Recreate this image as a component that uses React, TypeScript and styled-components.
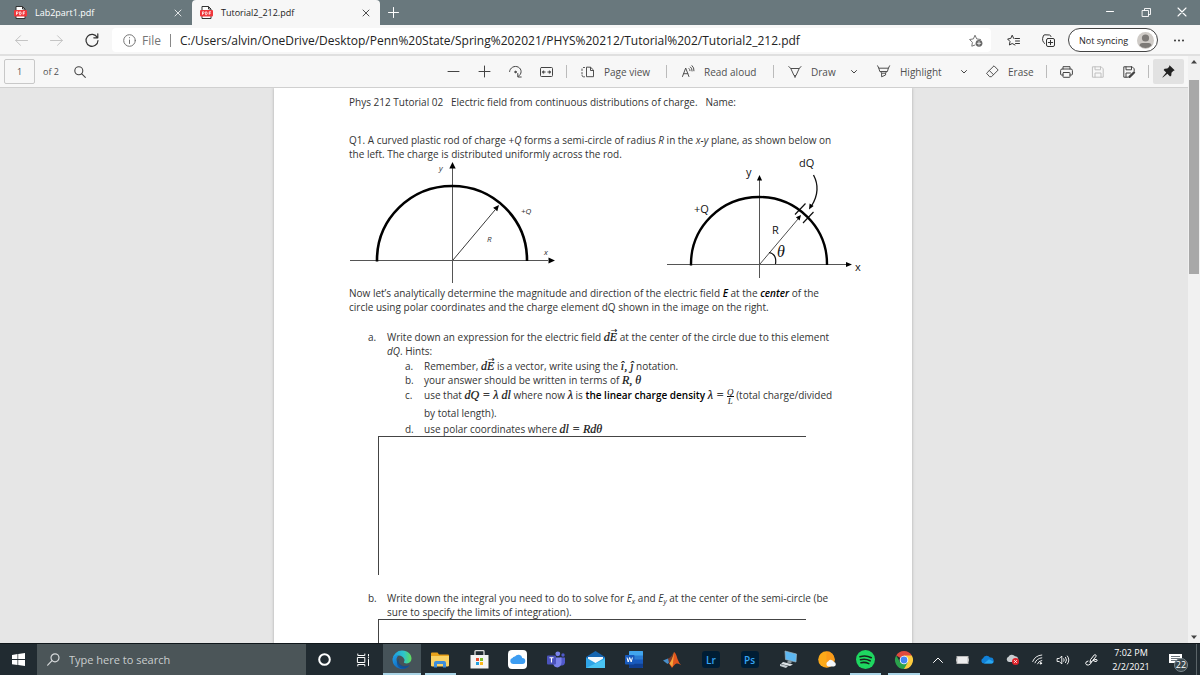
import React from "react";
import styled, { createGlobalStyle, css } from "styled-components";

const Global = createGlobalStyle`
  *, *::before, *::after { box-sizing: border-box; }
  body { margin: 0; background: #e6e6e6; font-family: "Open Sans", "Noto Sans", sans-serif; color: #222; }
  button, input { font: inherit; color: inherit; }
  button { border: 0; background: none; padding: 0; margin: 0; }
  svg { display: block; flex: none; overflow: visible; }
`;

/* ---------- window frame ---------- */

const Window = styled.div`
  display: flex;
  flex-direction: column;
  height: 100vh;
  overflow: hidden;
`;

const TabStrip = styled.header`
  display: flex;
  flex: none;
  height: 25px;
  background: #69787d;
  color: #fff;
`;

const Tab = styled.div<{ $active?: boolean }>`
  display: flex;
  align-items: center;
  gap: 8px;
  width: ${(p) => (p.$active ? 188 : 192)}px;
  padding: 0 5px 0 ${(p) => (p.$active ? 8 : 14)}px;
  font-size: 9px;
  line-height: 24px;
  ${(p) =>
    p.$active &&
    css`
      background: #f7f7f7;
      color: #222;
      border-radius: 4px 4px 0 0;
    `}
`;

const TabTitle = styled.span`
  flex: 1;
  white-space: nowrap;
`;

const TabClose = styled.button`
  display: grid;
  place-items: center;
  width: 18px;
  height: 18px;
`;

const NewTab = styled.button`
  display: grid;
  place-items: center;
  width: 26px;
`;

const WindowButtons = styled.div`
  display: flex;
  margin-left: auto;
`;

const WindowButton = styled.button`
  display: grid;
  place-items: center;
  width: 36px;
  height: 24px;
`;

const AddressBar = styled.div`
  display: flex;
  align-items: center;
  flex: none;
  height: 31px;
  padding: 1px 0 0 4px;
  background: #f7f7f7;
  border-bottom: 2px solid #e0e0e0;
`;

const NavButton = styled.button<{ $muted?: boolean }>`
  display: grid;
  place-items: center;
  width: 35px;
  height: 24px;
  color: ${(p) => (p.$muted ? "#c4c4c4" : "#333")};
`;

const UrlField = styled.div`
  display: flex;
  align-items: center;
  flex: 1;
  height: 24px;
  margin: 0 5px 0 3px;
  padding: 0 8px 0 11px;
  border-radius: 4px;
  background: #fff;
  color: #757575;
  font-size: 12px;
`;

const UrlScheme = styled.span`
  padding: 0 9px 0 6px;
`;

const UrlInput = styled.input`
  flex: 1;
  min-width: 0;
  height: 20px;
  margin-left: 9px;
  padding: 0;
  border: 0;
  outline: 0;
  background: none;
  color: #222;
`;

const Divider = styled.span<{ $tight?: boolean }>`
  flex: none;
  width: 1px;
  height: 13px;
  margin: 0 ${(p) => (p.$tight ? 0 : 4)}px;
  background: ${(p) => (p.$tight ? "#888" : "#bbb")};
`;

const Profile = styled.button`
  display: flex;
  align-items: center;
  justify-content: space-between;
  width: 90px;
  height: 24px;
  margin-left: 2px;
  padding: 0 3px 0 10px;
  border: 1px solid #444;
  border-radius: 12px;
  background: #fff;
  font-size: 9px;
`;

const MoreButton = styled(NavButton)`
  width: 42px;
`;

/* ---------- viewer ---------- */

const Viewer = styled.div`
  display: flex;
  flex: 1;
  min-height: 0;
`;

const ViewerMain = styled.div`
  display: flex;
  flex-direction: column;
  flex: 1;
  min-width: 0;
`;

const Toolbar = styled.div`
  display: flex;
  align-items: center;
  flex: none;
  height: 32px;
  padding: 0 4px;
  background: #f7f7f7;
  border-bottom: 1px solid #d0d0d0;
  color: #505050;
  font-size: 10px;
`;

const PageInfo = styled.label`
  display: flex;
  align-items: center;
  gap: 8px;
  margin-right: 6px;
  font-size: 9px;
`;

const PageNumber = styled.input`
  width: 31px;
  height: 25px;
  padding: 0;
  border: 1px solid #c8c8c8;
  border-radius: 2px;
  background: #f7f7f7;
  text-align: center;
`;

const Spacer = styled.span`
  flex: 1;
`;

const IconButton = styled.button<{ $pressed?: boolean; $faded?: boolean; $narrow?: boolean }>`
  display: grid;
  place-items: center;
  width: ${(p) => (p.$narrow ? 20 : 31)}px;
  height: 25px;
  border-radius: 2px;
  background: ${(p) => (p.$pressed ? "#e2e2e2" : "none")};
  color: ${(p) => (p.$faded ? "#c0c0c0" : p.$pressed ? "#222" : "#444")};
`;

const ToolButton = styled.button<{ $width: number }>`
  display: flex;
  align-items: center;
  gap: 9px;
  width: ${(p) => p.$width}px;
  height: 25px;
  padding-left: 10px;
  white-space: nowrap;
`;

const Canvas = styled.main`
  flex: 1;
  min-height: 0;
  padding-right: 2px;
  overflow: hidden;
  background: #e6e6e6;
`;

const ScrollTrack = styled.div`
  display: flex;
  flex-direction: column;
  align-items: center;
  width: 12px;
  background: #f1f1f1;
`;

const ScrollArrow = styled.button`
  display: grid;
  place-items: center;
  width: 12px;
  height: 12px;
  color: #444;
`;

const ScrollThumb = styled.div`
  width: 10px;
  height: 33%;
  margin: 12px 0 auto;
  background: #a8a8a8;
`;

/* ---------- document ---------- */

const Sheet = styled.article`
  width: 638px;
  min-height: 100%;
  margin: 0 auto;
  padding: 7px 0 0 75px;
  background: #fff;
  box-shadow: 0 0 3px #aaa;
  color: #333;
  font-size: 10px;
  line-height: 14px;
  white-space: nowrap;
`;

const Heading = styled.p`
  margin: 0 0 24px;
  white-space: pre;
`;

const Paragraph = styled.p`
  margin: 0;
`;

const Figure = styled.figure`
  margin: 0;
  height: 125px;
`;

const Question = styled.section`
  display: grid;
  grid-template-columns: 19px 1fr;
  margin-top: 16px;
  padding-left: 19px;
`;

const HintList = styled.ol`
  display: grid;
  grid-template-columns: 19px 1fr;
  margin: 1px 0 0;
  padding: 0 0 0 18px;
  list-style: none;
`;

const Hint = styled.li<{ $tall?: boolean }>`
  display: contents;
  line-height: ${(p) => (p.$tall ? 17 : 14)}px;
`;

const AnswerBox = styled.div`
  width: 428px;
  height: 139px;
  margin-left: 29px;
  border: solid #444;
  border-width: 1px 0 0 1px;
`;

const MathText = styled.i`
  font-family: "Liberation Serif", serif;
  font-size: 12px;
  line-height: 1px;
  color: #111;
  -webkit-text-stroke: 0.2px #111;
`;

const Vector = styled.span`
  position: relative;
  &::before {
    content: "→";
    position: absolute;
    left: 1px;
    top: -3px;
    font: 8px/8px "DejaVu Sans", sans-serif;
    -webkit-text-stroke: 0;
  }
`;

const Fraction = styled.span`
  display: inline-flex;
  flex-direction: column;
  align-items: center;
  height: 17px;
  vertical-align: middle;
  font-family: "Liberation Serif", serif;
  font-style: italic;
  font-size: 9px;
  line-height: 8px;
  color: #111;
`;

const Numerator = styled.span`
  border-bottom: 1px solid #111;
`;

const Sub = styled.sub`
  font-size: 7px;
  line-height: 1px;
  vertical-align: -2px;
`;

const Strong = styled.strong`
  color: #000;
  font-weight: 600;
`;

/* ---------- taskbar ---------- */

const Taskbar = styled.footer`
  display: flex;
  flex: none;
  height: 32px;
  border-top: 1px solid #10171b;
  background: #212b31;
  color: #fff;
`;

const StartButton = styled.button`
  display: grid;
  place-items: center;
  width: 37px;
`;

const SearchBox = styled.label`
  display: flex;
  align-items: center;
  gap: 9px;
  flex: 0 1 269px;
  padding-left: 10px;
  background: #4b5558;
  color: #d6d9da;
`;

const SearchInput = styled.input`
  width: 180px;
  padding: 0;
  border: 0;
  outline: 0;
  background: none;
  font-size: 11px;
  &::placeholder {
    color: #c9cdce;
    opacity: 1;
  }
`;

const SystemButtons = styled.div`
  display: grid;
  grid-template-columns: 1fr 1fr;
  width: 77px;
`;

const AppRow = styled.nav`
  display: grid;
  grid-template-columns: repeat(14, 1fr);
  width: 541px;
`;

const TaskButton = styled.button<{ $running?: boolean; $focused?: boolean }>`
  display: grid;
  place-items: center;
  margin: 0 4px 0 3px;
  border-top: 2px solid transparent;
  border-bottom: 2px solid ${(p) => (p.$running ? "#a9d3e5" : "transparent")};
  ${(p) =>
    p.$focused &&
    css`
      margin: 0 1px 0 0;
      border-top-color: #465359;
      background: #465359;
    `}
`;

const AdobeTile = styled.span`
  display: grid;
  place-items: center;
  width: 18px;
  height: 17px;
  border-radius: 3px;
  background: #001d34;
  color: #35a5f5;
  font-size: 10px;
  line-height: 16px;
  font-weight: 600;
`;

const Tray = styled.div`
  display: flex;
  flex: 1;
  padding-left: 1px;
`;

const TrayButton = styled.button`
  display: grid;
  place-items: center;
  width: 25px;
`;

const PenButton = styled(TrayButton)`
  width: 32px;
`;

const Clock = styled.time`
  display: flex;
  flex-direction: column;
  justify-content: center;
  width: 48px;
  text-align: center;
  font-size: 9px;
  line-height: 14px;
`;

const Notifications = styled.button`
  position: relative;
  display: grid;
  place-items: center;
  flex: 1;
  border-right: 1px solid #5a6468;
  margin-right: 3px;
`;

const Badge = styled.span`
  position: absolute;
  right: 8px;
  bottom: 3px;
  width: 14px;
  height: 14px;
  border: 1px solid #7b878c;
  border-radius: 7px;
  background: #3a474d;
  font-size: 9px;
  line-height: 12px;
`;

/* ---------- icons ---------- */

const Line = ({
  w = 14,
  h = w,
  box = `0 0 ${w} ${h}`,
  sw = 1,
  children,
}: {
  w?: number;
  h?: number;
  box?: string;
  sw?: number;
  children: React.ReactNode;
}) => (
  <svg width={w} height={h} viewBox={box} fill="none" stroke="currentColor" strokeWidth={sw} strokeLinecap="round" strokeLinejoin="round" aria-hidden="true">
    {children}
  </svg>
);

const PdfIcon = () => (
  <svg width="13" height="13" viewBox="0 0 13 13" aria-hidden="true">
    <path d="M2 .5h6.5l2.5 2.500v9.500H2z" fill="#fff" stroke="#333" />
    <path d="M8.500.5V3H11" fill="none" stroke="#333" />
    <rect x="0" y="4" width="13" height="6.500" rx="1" fill="#f0383c" />
    <path d="M2.500 8.800V5.800h1.200q.8.900 0 1.700H2.500M5.700 5.800v3h.8q1.700-1.500 0-3zM9.200 8.800v-3h1.800M9.200 7.300h1.500" fill="none" stroke="#fff" strokeWidth=".8" />
  </svg>
);

const Cross = ({ size = 6 }: { size?: number }) => (
  <Line w={size} box="0 0 6 6" sw={0.8}>
    <path d="M0 0l6 6M6 0L0 6" />
  </Line>
);

const Chevron = () => (
  <Line w={6} h={4}>
    <path d="M.5.5L3 3 5.500.5" />
  </Line>
);

/* ---------- figures ---------- */

const Diagrams = () => (
  <svg width="525" height="124" viewBox="349 161 525 124" role="img" aria-label="Semi-circular rod of charge, two views">
    <g fill="none" stroke="#555">
      <path d="M452.500 168V283M350 260.500H548" />
      <path d="M453 260L495 210" strokeWidth=".9" stroke="#222" />
      <path d="M759.500 178V278M667 264.500H847" />
      <path d="M760 264L798 219" strokeWidth=".8" stroke="#222" />
      <path d="M769 252.500Q777 254 775.500 264M795 214.500L805.500 203.500M803 223L813.500 212" stroke="#111" strokeWidth="1.200" />
      <path d="M813.500 175Q821.500 190 811.500 206" stroke="#111" strokeWidth="1.300" />
    </g>
    <g fill="none" stroke="#000">
      <path d="M377 261.500V260A75 74 0 0 1 527 260V261" strokeWidth="2.600" />
      <path d="M691 265.500V264A68 67 0 0 1 827 264V265" strokeWidth="2.400" />
    </g>
    <g fill="#000">
      <path d="M452.500 162l3.200 6.500h-6.400zM555 260.500l-6.500 3v-6zM499 205l-1.700 6.300-4.200-3.600zM759.500 175l2.600 5.500h-5.200zM852 264.500l-6 2.600v-5.200zM801 215l-1.400 5.500-3.700-3.200zM809 209.500l.6-6 4 2.500z" />
    </g>
    <g fill="#333" fontFamily="Open Sans, sans-serif" fontSize="8" fontStyle="italic">
      <text x="439" y="171">y</text>
      <text x="521" y="214">+Q</text>
      <text x="487" y="242">R</text>
      <text x="544" y="255">x</text>
    </g>
    <g fill="#111" fontFamily="Open Sans, sans-serif" fontSize="11">
      <text x="746" y="176">y</text>
      <text x="799" y="167">dQ</text>
      <text x="694" y="213">+Q</text>
      <text x="772" y="234">R</text>
      <text x="855" y="271">x</text>
    </g>
    <text x="777" y="257" fill="#111" fontFamily="Liberation Serif, serif" fontStyle="italic" fontSize="16">θ</text>
  </svg>
);

const VecE = () => (
  <MathText>
    d<Vector>E</Vector>
  </MathText>
);

/* ---------- app ---------- */

export default function App() {
  return (
    <>
      <Global />
      <Window>
        <TabStrip>
          <Tab>
            <PdfIcon />
            <TabTitle>Lab2part1.pdf</TabTitle>
            <TabClose aria-label="Close Lab2part1.pdf"><Cross /></TabClose>
          </Tab>
          <Tab $active>
            <PdfIcon />
            <TabTitle>Tutorial2_212.pdf</TabTitle>
            <TabClose aria-label="Close Tutorial2_212.pdf"><Cross /></TabClose>
          </Tab>
          <NewTab aria-label="New tab">
            <Line w={11}><path d="M5.500.5v10M.5 5.500h10" /></Line>
          </NewTab>
          <WindowButtons>
            <WindowButton aria-label="Minimize"><Line w={8} h={2}><path d="M.5.5h7" /></Line></WindowButton>
            <WindowButton aria-label="Restore">
              <Line w={9} sw={0.9}><path d="M.5 2.500h6v6h-6zM2.500 2.500v-2h6v6h-2" /></Line>
            </WindowButton>
            <WindowButton aria-label="Close"><Cross size={8} /></WindowButton>
          </WindowButtons>
        </TabStrip>

        <AddressBar>
          <NavButton $muted aria-label="Back">
            <Line w={13} h={11}><path d="M12.500 5.500H.7M5.500.7L.7 5.500l4.800 4.800" /></Line>
          </NavButton>
          <NavButton $muted aria-label="Forward">
            <Line w={13} h={11}><path d="M.5 5.500h11.800M7.500.7l4.800 4.800-4.800 4.800" /></Line>
          </NavButton>
          <NavButton aria-label="Refresh">
            <Line w={14} sw={1.2}><path d="M12.300 4.500A6 6 0 1 0 13 7.500M12.800.8v4H8.800" /></Line>
          </NavButton>
          <UrlField>
            <Line w={13}>
              <circle cx="6.500" cy="6.500" r="5.800" />
              <path d="M6.500 6v3.500M6.500 3.600v.2" />
            </Line>
            <UrlScheme>File</UrlScheme>
            <Divider $tight />
            <UrlInput
              aria-label="Address"
              defaultValue="C:/Users/alvin/OneDrive/Desktop/Penn%20State/Spring%202021/PHYS%20212/Tutorial%202/Tutorial2_212.pdf"
            />
            <Line w={14} h={13}>
              <path d="M6 11L2.800 12.200 3.400 8.300.6 5.500l3.800-.6L6 1.200l1.700 3.700 3.800.6" />
              <circle cx="10" cy="9.300" r="3.400" fill="#666" stroke="none" />
              <path d="M10 7.600V11M8.300 9.300h3.400" stroke="#fff" strokeWidth=".8" />
            </Line>
          </UrlField>
          <NavButton aria-label="Favorites">
            <Line w={13} h={12}>
              <path d="M8 11L5.200 9.500 2.400 11l.6-3.500L.6 5l3.200-.6L5.200 1.200l1.500 3.200M8 4.500h4.500M8.500 7h4M8.500 9.500h4" />
            </Line>
          </NavButton>
          <NavButton aria-label="Collections">
            <Line w={13}>
              <rect x="4.500" y="4.500" width="8" height="8" rx="1.500" />
              <path d="M8.500 6.300v4.400M6.300 8.500h4.400M2.800 9.500L1.500 8.300Q.3 6.500.6 4.500L1.300 2Q1.600.8 3 .8l4.500.2q1.200.2 1.500 1.500" />
            </Line>
          </NavButton>
          <Profile>
            Not syncing
            <svg width="17" height="17" viewBox="0 0 17 17" aria-hidden="true">
              <circle cx="8.500" cy="8.500" r="8.500" fill="#cfcbc7" />
              <circle cx="8.500" cy="6" r="3.600" fill="#7d7a77" />
              <path d="M2.500 13.500q0-2.500 3-2.500h6q3 0 3 2.500a8.400 8.400 0 0 1-12 0z" fill="#7d7a77" />
            </svg>
          </Profile>
          <MoreButton aria-label="Settings and more">
            <svg width="12" height="3" viewBox="0 0 12 3" fill="currentColor" aria-hidden="true">
              <circle cx="2" cy="1.500" r="1" /><circle cx="6" cy="1.500" r="1" /><circle cx="10" cy="1.500" r="1" />
            </svg>
          </MoreButton>
        </AddressBar>

        <Viewer>
          <ViewerMain>
            <Toolbar>
              <PageInfo>
                <PageNumber defaultValue="1" aria-label="Page number" />
                of 2
              </PageInfo>
              <IconButton aria-label="Find">
                <Line w={12} sw={1.1}><circle cx="4.800" cy="4.800" r="4" /><path d="M7.800 7.800l3.500 3.500" /></Line>
              </IconButton>
              <Spacer />
              <IconButton aria-label="Zoom out"><Line w={11}><path d="M0 5.500h11" /></Line></IconButton>
              <IconButton aria-label="Zoom in"><Line w={11}><path d="M0 5.500h11M5.500 0v11" /></Line></IconButton>
              <IconButton aria-label="Rotate">
                <Line w={13} h={12}>
                  <path d="M.6 5.500A5.800 5.300 0 1 1 9.500 10.200M8.800 7.500v3.500h3.400" />
                  <circle cx="6.500" cy="6" r=".8" fill="currentColor" />
                </Line>
              </IconButton>
              <IconButton aria-label="Fit to width">
                <Line w={13} h={10}>
                  <rect x=".5" y=".5" width="12" height="9" rx="1" />
                  <path d="M2.500 5h2.700M7.800 5h2.700" />
                  <path d="M2.200 5l1.600-1.500v3zM10.800 5L9.200 3.500v3z" fill="currentColor" strokeWidth=".4" />
                </Line>
              </IconButton>
              <Divider />
              <ToolButton $width={91}>
                <Line w={14} h={12}>
                  <path d="M5.500 1.500v9.200h7V4L9.800 1.500zM9.500 1.500v3h3M3.500 1.500h-1M1 3v1.500M1 6.500V8M1 9.500q.2 1.300 1.500 1.300h1" />
                </Line>
                Page view
              </ToolButton>
              <Divider />
              <ToolButton $width={98}>
                <Line w={14} h={14}>
                  <path d="M1.500 11.500L4.700 3l3.200 8.500M2.600 8.700h4.200M8 3.500q1 .8 1 2.200M9.500 2q1.800 1.500 1.600 4M11 .6q2.300 2 2 5.200" />
                </Line>
                Read aloud
              </ToolButton>
              <Divider />
              <ToolButton $width={66}>
                <Line w={14} h={14}>
                  <path d="M.8 1.500L2.800 3.500h8.400L13 1.500M2.800 3.500L6 10.500h2l3.200-7M6.500 10.500L7 12.500l.6-2" />
                </Line>
                Draw
              </ToolButton>
              <IconButton $narrow aria-label="Draw options"><Chevron /></IconButton>
              <ToolButton $width={90}>
                <Line w={17} h={14} box="-3 0 17 14">
                  <path d="M.6.8l1.200 2.400h9.600L12.600.8M1.800 3.200l1 3.300h7.600l1-3.300M3.600 6.500l1 1.700v3.600l4-1.800V8.200l1-1.700M4.600 8.200h4" />
                </Line>
                Highlight
              </ToolButton>
              <IconButton $narrow aria-label="Highlight options"><Chevron /></IconButton>
              <ToolButton $width={68}>
                <Line w={15} h={13} box="-2 0 15 13">
                  <path d="M.8 8L8 .8l4.200 4.200L5.500 11.700H4zM3.300 5.500l4.200 4.200" />
                </Line>
                Erase
              </ToolButton>
              <Divider />
              <IconButton aria-label="Print">
                <Line w={13} h={12}>
                  <path d="M3 3V.7h7V3M3 9H1.500Q.6 9 .6 8V4.500Q.6 3 2 3h9q1.400 0 1.400 1.500V8q0 1-1 1H10" />
                  <rect x="3" y="6.500" width="7" height="4.800" rx=".5" />
                </Line>
              </IconButton>
              <IconButton $faded aria-label="Save">
                <Line w={12}><path d="M.8.8h8.400l2 2v8.400H.8zM3 .8v3h5.500v-3M3 11.200V7h6v4.200" /></Line>
              </IconButton>
              <IconButton aria-label="Save as">
                <Line w={12}>
                  <path d="M5 11.200H.8V.8h8.400l2 2V5M3 .8v3h5.500v-3M3 11.200V7h4.500" />
                  <path d="M6.500 10.800L11 6.500" strokeWidth="2.400" />
                </Line>
              </IconButton>
              <Divider />
              <IconButton $pressed aria-label="Unpin toolbar">
                <svg width="13" height="13" viewBox="0 0 13 13" fill="currentColor" aria-hidden="true">
                  <path d="M7.500.3l5.200 5-1.500.6-1.700 1.900-.2 2.600-1.200 1-2.700-2.700L.8 12.600l-.4-.4L4.200 7.500 1.600 4.900l1-1.100 2.700-.2L7 1.900z" />
                </svg>
              </IconButton>
            </Toolbar>

            <Canvas>
              <Sheet>
                <Heading>Phys 212 Tutorial 02   Electric field from continuous distributions of charge.   Name:</Heading>
                <Paragraph>
                  Q1. A curved plastic rod of charge +<i>Q</i> forms a semi-circle of radius <i>R</i> in the <i>x-y</i> plane, as shown below on<br />
                  the left. The charge is distributed uniformly across the rod.
                </Paragraph>
                <Figure><Diagrams /></Figure>
                <Paragraph>
                  Now let’s analytically determine the magnitude and direction of the electric field{" "}
                  <Strong><i>E</i></Strong> at the <Strong><i>center</i></Strong> of the<br />
                  circle using polar coordinates and the charge element dQ shown in the image on the right.
                </Paragraph>

                <Question>
                  <span>a.</span>
                  <div>
                    <Paragraph>
                      Write down an expression for the electric field <VecE /> at the center of the circle due to this element<br />
                      <i>dQ</i>. Hints:
                    </Paragraph>
                    <HintList>
                      <Hint>
                        <span>a.</span>
                        <span>Remember, <VecE /> is a vector, write using the <MathText>î, ĵ</MathText> notation.</span>
                      </Hint>
                      <Hint>
                        <span>b.</span>
                        <span>your answer should be written in terms of <MathText>R, θ</MathText></span>
                      </Hint>
                      <Hint $tall>
                        <span>c.</span>
                        <span>
                          use that <MathText>dQ = λ dl</MathText> where now <MathText>λ</MathText> is{" "}
                          <Strong>the linear charge density</Strong> <MathText>λ = </MathText>
                          <Fraction><Numerator>Q</Numerator><span>L</span></Fraction> (total charge/divided<br />
                          by total length).
                        </span>
                      </Hint>
                      <Hint>
                        <span>d.</span>
                        <span>use polar coordinates where <MathText>dl = Rdθ</MathText></span>
                      </Hint>
                    </HintList>
                  </div>
                </Question>
                <AnswerBox />

                <Question>
                  <span>b.</span>
                  <Paragraph>
                    Write down the integral you need to do to solve for <i>E</i><Sub><i>x</i></Sub> and <i>E</i><Sub><i>y</i></Sub> at the center of the semi-circle (be<br />
                    sure to specify the limits of integration).
                  </Paragraph>
                </Question>
                <AnswerBox />
              </Sheet>
            </Canvas>
          </ViewerMain>
          <ScrollTrack>
            <ScrollArrow aria-label="Scroll up">
              <svg width="6" height="4" viewBox="0 0 6 4" fill="currentColor"><path d="M3 0l3 3.500H0z" /></svg>
            </ScrollArrow>
            <ScrollThumb />
            <ScrollArrow aria-label="Scroll down">
              <svg width="6" height="4" viewBox="0 0 6 4" fill="currentColor"><path d="M3 4L6 .5H0z" /></svg>
            </ScrollArrow>
          </ScrollTrack>
        </Viewer>

        <Taskbar>
          <StartButton aria-label="Start">
            <svg width="13" height="13" viewBox="0 0 13 13" fill="#fff"><path d="M0 1.900L5.500 1v5.100H0zM6.200.9L13 0v6.100H6.200zM0 6.900h5.500V12L0 11.200zM6.200 6.900H13V13l-6.800-1z" /></svg>
          </StartButton>
          <SearchBox>
            <Line w={13} sw={1.2}><circle cx="8" cy="4.800" r="4" /><path d="M5 7.700L.7 12.200" /></Line>
            <SearchInput placeholder="Type here to search" aria-label="Search" />
          </SearchBox>
          <SystemButtons>
            <TaskButton aria-label="Cortana">
              <Line w={13} sw={2}><circle cx="6.500" cy="6.500" r="5.300" /></Line>
            </TaskButton>
            <TaskButton aria-label="Task view">
              <Line w={13} h={12} box="0 0 13 12"><path d="M.8 0v1.500h7V0M.8 12v-1.500h7V12M.8 3.500h7v5h-7zM11.500.5v1.500M11.500 5.500v6M11.500 3.500v.4" /></Line>
            </TaskButton>
          </SystemButtons>
          <AppRow>
            <TaskButton $running $focused aria-label="Edge">
              <svg width="20" height="20" viewBox="0 0 20 20">
                <defs>
                  <linearGradient id="edgeTop" x1="0" x2="1"><stop offset="0" stopColor="#1b9de2" /><stop offset=".6" stopColor="#2fc6c9" /><stop offset="1" stopColor="#62dc58" /></linearGradient>
                  <linearGradient id="edgeLow" x1="0" y1="0" x2="1" y2="1"><stop offset="0" stopColor="#1fa0ea" /><stop offset="1" stopColor="#0b4fa8" /></linearGradient>
                </defs>
                <path d="M.6 9A9.500 9.500 0 0 1 10 .6c6 0 9.500 4 9.500 8 0 3-2 4.800-4.800 4.800-2 0-3-.8-2.800-1.400.8-1 .8-2.200.3-3.100C11 6.500 8.500 5 6 5.500 3 6 1 7.500.6 9z" fill="url(#edgeTop)" />
                <path d="M.5 10C.5 7 3.500 5 7 5.300c-2.500 1.500-3 4.200-2 6.700 1.500 3.500 5.500 5.500 9 4.800 1.300-.2 2.500-.8 3.500-1.500A9.500 9.500 0 0 1 .5 10z" fill="url(#edgeLow)" />
                <path d="M7 8.500c-1.500 3.500 1 7 5 7.500 2 .3 4-.2 5.500-.8-2.500 3.500-7.500 4.500-10.500 2-3-2.700-2.500-7 0-8.700z" fill="#114a8b" opacity=".7" />
              </svg>
            </TaskButton>
            <TaskButton $running aria-label="File Explorer">
              <svg width="18" height="16" viewBox="0 0 18 16">
                <path d="M0 1.500Q0 .5 1 .5h5.500l1.500 2H17q1 0 1 1V14H0z" fill="#e9a21b" />
                <path d="M0 4h18v9q0 1.500-1.500 1.500h-15Q0 14.500 0 13z" fill="#fbd264" />
                <path d="M3 15.500V11q0-2 2-2h8q2 0 2 2v4.500h-3V12H6v3.500z" fill="#3e8edb" />
              </svg>
            </TaskButton>
            <TaskButton aria-label="Microsoft Store">
              <svg width="19" height="19" viewBox="0 0 19 19">
                <path d="M5 6V1.500q0-.8.8-.8h7.400q.8 0 .8.800V6" fill="none" stroke="#ddd" strokeWidth="1.300" />
                <rect x=".5" y="5" width="18" height="13.500" fill="#f3f3f3" />
                <path d="M6 8h3v3H6z" fill="#e8492c" /><path d="M10 8h3v3h-3z" fill="#79b829" />
                <path d="M6 12h3v3H6z" fill="#219fe0" /><path d="M10 12h3v3h-3z" fill="#fbb61a" />
              </svg>
            </TaskButton>
            <TaskButton aria-label="iCloud">
              <svg width="19" height="19" viewBox="0 0 19 19">
                <rect width="19" height="19" rx="4" fill="#fff" />
                <path d="M5 14a3 3 0 0 1-.5-5.900A2.500 2.500 0 0 1 7 6.500 4 4 0 0 1 14.300 8a3 3 0 0 1 0 6z" fill="#3d9df2" />
              </svg>
            </TaskButton>
            <TaskButton aria-label="Teams">
              <svg width="18" height="17" viewBox="0 0 18 17">
                <circle cx="16" cy="4" r="1.700" fill="#5059c9" /><circle cx="10.800" cy="2.800" r="2.400" fill="#7b83eb" />
                <path d="M13 6.500h5v5q-.5 3-3 3h-2z" fill="#5059c9" />
                <path d="M6 6.500h8.500v5Q14 16 10.300 16.500 6.500 16 6 12z" fill="#7b83eb" />
                <rect y="4.500" width="9" height="9" rx="1" fill="#4b53bc" />
                <path d="M2.500 6.800h4M4.500 7v4.500" stroke="#fff" strokeWidth="1.100" />
              </svg>
            </TaskButton>
            <TaskButton aria-label="Mail">
              <svg width="19" height="17" viewBox="0 0 19 17">
                <path d="M0 6L9.500 0 19 6v2H0z" fill="#1665b0" />
                <path d="M2 6h15v7H2z" fill="#f5f9fc" />
                <path d="M0 6.500l9.500 5.500L19 6.500V17H0z" fill="#2fa4e7" />
                <path d="M0 17L19 8v9z" fill="#49c3f2" />
              </svg>
            </TaskButton>
            <TaskButton aria-label="Word">
              <svg width="18" height="17" viewBox="0 0 18 17">
                <rect x="4" width="14" height="17" rx="1" fill="#2b7cd3" />
                <path d="M5 0h12q1 0 1 1v3.500H4V1q0-1 1-1z" fill="#41a5ee" /><path d="M4 8.500h14v4H4z" fill="#185abd" /><path d="M4 12.500h14V16q0 1-1 1H5q-1 0-1-1z" fill="#103f91" />
                <rect y="4" width="9.500" height="9.500" rx="1" fill="#185abd" />
                <path d="M2 6.500l1.200 4.500 1.500-4.500L6.200 11l1.200-4.500" fill="none" stroke="#fff" />
              </svg>
            </TaskButton>
            <TaskButton aria-label="MATLAB">
              <svg width="18" height="17" viewBox="0 0 18 17">
                <path d="M0 9.500L5 7.500l3 2.500-3.500 3z" fill="#4a8fc9" /><path d="M5 7.500q2.500-.5 5-5l-.5 7L6 12z" fill="#7a3b2b" />
                <path d="M11 1q2 1 3.500 7 1.500 4 3.500 6-2.500-2-4.500-1.500T9 17L6 12.500Q9 10 11 1z" fill="#e2561e" />
                <path d="M11 1q-.5 7-1.500 15L6.500 12.500Q9.500 9 11 1z" fill="#f3a53a" />
              </svg>
            </TaskButton>
            <TaskButton><AdobeTile>Lr</AdobeTile></TaskButton>
            <TaskButton><AdobeTile>Ps</AdobeTile></TaskButton>
            <TaskButton aria-label="Remote desktop">
              <svg width="17" height="17" viewBox="0 0 17 17">
                <path d="M5 0l11.500 3-.5 8L5.500 8.500z" fill="#5db8f2" stroke="#9db4c2" strokeWidth=".7" />
                <path d="M8 9.500l4 1-1 2-4-1z" fill="#8f9a9f" /><path d="M3 11l10 2.500-3 1.500-9-2z" fill="#dde3e6" /><path d="M0 13l8 2-2 2-6-2z" fill="#c6cdd1" />
              </svg>
            </TaskButton>
            <TaskButton aria-label="Weather">
              <svg width="18" height="18" viewBox="0 0 18 18">
                <circle cx="8.500" cy="8.500" r="8.300" fill="#fba919" /><path d="M8.500.2a8.300 8.300 0 0 1 0 16.600z" fill="#f98e1b" opacity=".5" />
                <path d="M10 15.500a2.800 2.800 0 0 1 .3-5.200 3.200 3.200 0 0 1 5.700.7 2.300 2.300 0 0 1 0 4.500z" fill="#f4f6f8" />
              </svg>
            </TaskButton>
            <TaskButton $running aria-label="Spotify">
              <svg width="19" height="19" viewBox="0 0 19 19">
                <circle cx="9.500" cy="9.500" r="9.500" fill="#1ed760" />
                <path d="M4 6.700q6-1.800 11.300 1M4.500 9.800q5-1.400 9.600 1M5 12.700q4-1 7.800.9" fill="none" stroke="#17231c" strokeWidth="1.600" strokeLinecap="round" />
              </svg>
            </TaskButton>
            <TaskButton $running aria-label="Chrome">
              <svg width="18" height="18" viewBox="0 0 18 18">
                <path d="M9 9L1.200 4.500A9 9 0 0 1 16.800 4.500z" fill="#df4a3e" /><path d="M9 9V4.500h7.800A9 9 0 0 1 9 18z" fill="#fccb3f" /><path d="M1.200 4.500A9 9 0 0 0 9 18l3.900-6.800L5 11z" fill="#2ba24c" />
                <circle cx="9" cy="9" r="4.300" fill="#fff" /><circle cx="9" cy="9" r="3.400" fill="#4285f4" />
              </svg>
            </TaskButton>
          </AppRow>
          <Tray>
            <TrayButton aria-label="Show hidden icons"><Line w={10} h={6}><path d="M.5 5.500L5 1l4.500 4.500" /></Line></TrayButton>
            <TrayButton aria-label="Battery">
              <svg width="13" height="8" viewBox="0 0 13 8"><rect x="1" y=".5" width="11" height="7" fill="#eee" stroke="#bbb" /><path d="M0 2.500h1v3H0zM12 2.500h1v3h-1z" fill="#bbb" /></svg>
            </TrayButton>
            <TrayButton aria-label="OneDrive">
              <svg width="13" height="9" viewBox="0 0 13 9"><path d="M3 8.500A2.700 2.700 0 0 1 2 3.300 4 4 0 0 1 9 2.600a3 3 0 0 1 1.300 5.900z" fill="#1181d8" /><path d="M3 8.500L8 4.300l4.500 2.500a2 2 0 0 1-1.800 1.700z" fill="#2aa7f0" /></svg>
            </TrayButton>
            <TrayButton aria-label="OneDrive sync error">
              <svg width="13" height="11" viewBox="0 0 13 11"><path d="M3 8A2.700 2.700 0 0 1 2.500 2.800 3.800 3.800 0 0 1 9 2.300 3 3 0 0 1 10.500 8z" fill="#c9cdd0" /><circle cx="9.500" cy="7.500" r="3.500" fill="#e0242c" /><path d="M8.200 6.200l2.600 2.600M10.800 6.200L8.200 8.800" stroke="#fff" strokeWidth=".9" /></svg>
            </TrayButton>
            <TrayButton aria-label="Wi-Fi">
              <Line w={11} h={11} sw={0.9}><path d="M.7 7.500Q3 1.500 9.800 1M3 8.800Q4.500 4.500 9.800 3.800M5.500 9.800Q6.500 7 9.800 6.500" /><circle cx="8.800" cy="9.300" r=".8" fill="currentColor" /></Line>
            </TrayButton>
            <TrayButton aria-label="Volume">
              <Line w={12} h={10} sw={0.9}><path d="M.5 3.500h1.800L4.800 1v8L2.300 6.500H.5zM6.800 3.700q1 1.300 0 2.600M8.600 2.300q2 2.700 0 5.400M10.400 1q3 4 0 8" /></Line>
            </TrayButton>
            <PenButton aria-label="Windows Ink">
              <Line w={13} h={12}><path d="M3 7Q.5 7.500.7 9.500 1.200 11.500 3.500 11 6 10.500 6.500 8M5 8L5.600 5.500 9.300.9q.9-.6 1.500.1t.1 1.500L7.300 7.200zM8 7q2-2.500 3.700-1.500Q13 7 11 7.500T8.500 6" /></Line>
            </PenButton>
            <Clock><span>7:02 PM</span><span>2/2/2021</span></Clock>
            <Notifications aria-label="22 notifications">
              <svg width="13" height="12" viewBox="0 0 13 12"><path d="M0 0h13v9H8l-2 2.500V9H0z" fill="#fff" /><path d="M2 2.500h9M2 4.500h9M2 6.500h6" stroke="#46525a" strokeWidth=".8" /></svg>
              <Badge>22</Badge>
            </Notifications>
          </Tray>
        </Taskbar>
      </Window>
    </>
  );
}
